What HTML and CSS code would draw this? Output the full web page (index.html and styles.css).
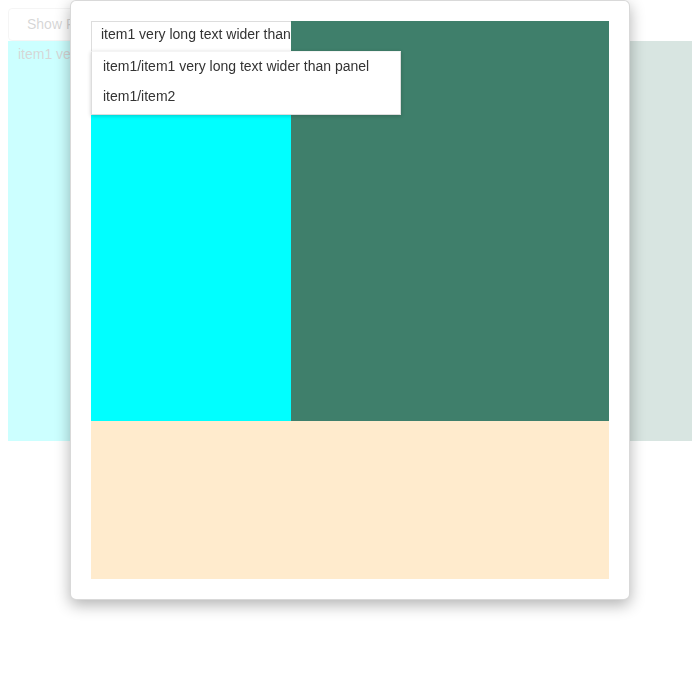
FILE: index.html
```html
<!DOCTYPE html>
<html>
<head>
<meta charset="utf-8">
<link rel="stylesheet" href="styles.css">
</head>
<body>
<div class="page">
  <button class="btn">Show Reports</button>
  <div class="layout">
    <div class="pane pane-cyan">
      <div class="field field-bg">item1 very long text wider than panel</div>
    </div>
    <div class="pane pane-green"></div>
  </div>
</div>
<div class="backdrop"></div>
<div class="modal">
  <div class="modal-body">
    <div class="row">
      <div class="pane pane-cyan">
        <div class="field">item1 very long text wider than panel</div>
      </div>
      <div class="pane pane-green wide"></div>
    </div>
    <div class="pane-beige"></div>
    <div class="dropdown">
      <div class="item">item1/item1 very long text wider than panel</div>
      <div class="item">item1/item2</div>
    </div>
  </div>
</div>
</body>
</html>
```
FILE: styles.css
```css
html, body {
  margin: 0;
  padding: 0;
}
body {
  margin: 8px;
  font-family: "Liberation Sans", Arial, sans-serif;
  font-size: 14px;
  color: #333;
  background: #fff;
}
.btn {
  display: block;
  height: 33px;
  padding: 0 18px 1px;
  font-family: "Liberation Sans", Arial, sans-serif;
  font-size: 14px;
  color: #333;
  background: #fff;
  border: 1px solid #ccc;
  border-radius: 4px;
}
.layout {
  display: flex;
  height: 400px;
}
.pane {
  height: 400px;
}
.pane-cyan {
  width: 200px;
  flex: none;
  background: #00ffff;
}
.pane-green {
  flex: 1;
  background: #3f7f6b;
  position: relative;
  z-index: 1;
}
.field {
  width: 250px;
  height: 29px;
  line-height: 25px;
  padding: 0 9px;
  background: #fff;
  border: 1px solid #ddd;
  border-bottom: none;
  white-space: nowrap;
  overflow: hidden;
}
.field-bg {
  background: transparent;
  border-color: transparent;
}
.backdrop {
  position: fixed;
  inset: 0;
  background: rgba(255, 255, 255, 0.8);
  z-index: 5;
}
.modal {
  position: absolute;
  left: 70px;
  top: 0;
  width: 558px;
  background: #fff;
  border: 1px solid rgba(0, 0, 0, 0.15);
  border-radius: 6px;
  box-shadow: 0 5px 15px rgba(0, 0, 0, 0.3);
  z-index: 10;
}
.modal-body {
  position: relative;
  padding: 20px;
}
.row {
  display: flex;
}
.pane-beige {
  height: 158px;
  background: #ffebcd;
}
.dropdown {
  position: absolute;
  left: 20px;
  top: 50px;
  width: 308px;
  padding: 0 0 2px;
  background: #fff;
  border: 1px solid #ddd;
  border-top-color: #f4f4f4;
  box-shadow: 0 1px 4px rgba(0, 0, 0, 0.2);
  z-index: 3;
}
.item {
  height: 30px;
  line-height: 28px;
  padding: 0 11px;
  white-space: nowrap;
}
```
